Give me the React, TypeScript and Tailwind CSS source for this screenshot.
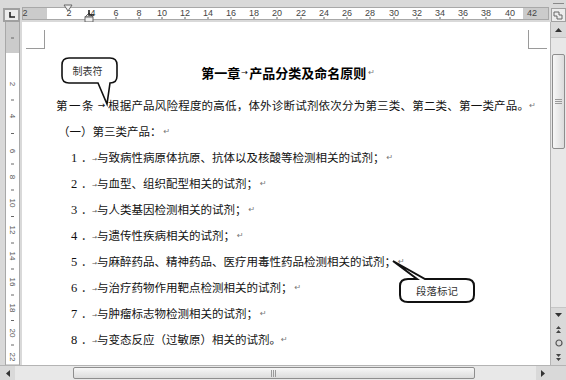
import React from 'react'

const hNums: [number, string][] = [
  [25, '2'], [69, '2'], [93, '4'], [116, '6'], [139, '8'], [162, '10'], [185, '12'], [208, '14'],
  [231, '16'], [254, '18'], [277, '20'], [301, '22'], [324, '24'], [347, '26'], [370, '28'],
  [394, '30'], [417, '32'], [440, '34'], [463, '36'], [486, '38'], [510, '40'], [532, '42'],
]

const vNums: [number, string][] = [
  [84, '2'], [116, '4'], [151, '6'], [177, '8'], [203, '10'], [230, '12'], [256, '14'],
  [282, '16'], [308, '18'], [333, '20'], [357, '22'],
]

const items = [
  '与致病性病原体抗原、抗体以及核酸等检测相关的试剂；',
  '与血型、组织配型相关的试剂；',
  '与人类基因检测相关的试剂；',
  '与遗传性疾病相关的试剂；',
  '与麻醉药品、精神药品、医疗用毒性药品检测相关的试剂；',
  '与治疗药物作用靶点检测相关的试剂；',
  '与肿瘤标志物检测相关的试剂；',
  '与变态反应（过敏原）相关的试剂。',
]

const ParaMark = ({ tight }: { tight?: boolean }) => (
  <span
    className={
      tight
        ? 'text-[8px] font-normal text-[#777] font-["DejaVu_Sans",sans-serif]'
        : 'ml-[2px] text-[8px] font-normal text-[#777] font-["DejaVu_Sans",sans-serif]'
    }
  >
    ↵
  </span>
)

function HRuler() {
  return (
    <svg width="528" height="22" className="block">
      <rect x="0" y="0" width="528" height="22" fill="#d9d9d9" />
      <rect x="0.5" y="7.5" width="526" height="12" fill="#cbcbcb" stroke="#a8a8a8" />
      <rect x="25" y="8" width="476" height="11" fill="#ffffff" />
      {hNums.map(([x, t]) => (
        <text
          key={x}
          x={x - 22}
          y="15.5"
          fontSize="9"
          textAnchor="middle"
          fill="#444"
          fontFamily="Liberation Sans, Arial, sans-serif"
        >
          {t}
        </text>
      ))}
      {hNums.slice(3, 21).map(([x]) => (
        <line key={x} x1={x - 22} y1="17" x2={x - 22} y2="19" stroke="#666" />
      ))}
      {/* indent markers */}
      <path d="M42 5 H50 L46 11 Z" fill="#eeeeee" stroke="#666" />
      <path d="M63 17 L67 13 L71 17 Z" fill="#eeeeee" stroke="#666" />
      <rect x="63" y="17" width="8" height="5" fill="#eeeeee" stroke="#666" />
      <path d="M67 10 V15 H72" fill="none" stroke="#222" strokeWidth="1.6" />
    </svg>
  )
}

function VRuler() {
  return (
    <svg width="22" height="343" className="block shrink-0">
      <rect x="0" y="0" width="22" height="343" fill="#d9d9d9" />
      <rect x="5.5" y="0" width="14" height="343" fill="#ffffff" stroke="#a8a8a8" />
      <rect x="6" y="0" width="13" height="31" fill="#cbcbcb" />
      {vNums.map(([y, t]) => (
        <text
          key={y}
          x="0"
          y="0"
          fontSize="8"
          textAnchor="middle"
          fill="#555"
          fontFamily="Liberation Sans, Arial, sans-serif"
          transform={`translate(9.5 ${y - 22}) rotate(90)`}
        >
          {t}
        </text>
      ))}
      {vNums.map(([y], i) => {
        const next = vNums[i + 1] ? vNums[i + 1][0] : y + 26
        const mid = (y + next) / 2 - 22
        return <line key={y} x1="11" y1={mid} x2="14" y2={mid} stroke="#666" />
      })}
      <line x1="11" y1="16" x2="14" y2="16" stroke="#666" />
    </svg>
  )
}

function VScroll() {
  return (
    <div className="w-[16px] shrink-0 flex flex-col bg-[#d9d9d9] border-l border-[#b4b4b4]">
      <div className="h-[15px] flex items-center justify-center">
        <svg width="7" height="4">
          <path d="M0 4 L3.5 0 L7 4 Z" fill="#333" />
        </svg>
      </div>
      <div className="h-[271px] bg-[#e8e8e8] px-[1px] pt-[16px] border-y border-[#c6c6c6]">
        <div className="h-[95px] rounded-[2px] border border-[#8e8e8e] bg-gradient-to-r from-[#f7f7f7] to-[#dcdcdc] flex items-center justify-center">
          <svg width="7" height="6">
            <path d="M0 0.5 H7 M0 2.5 H7 M0 4.5 H7" stroke="#9a9a9a" />
          </svg>
        </div>
      </div>
      <div className="h-[14px] flex items-center justify-center">
        <svg width="7" height="4">
          <path d="M0 0 L3.5 4 L7 0 Z" fill="#333" />
        </svg>
      </div>
      <div className="h-[14px] flex items-center justify-center">
        <svg width="5" height="7">
          <path d="M0 3 L2.5 0 L5 3 Z M0 7 L2.5 4 L5 7 Z" fill="#444" />
        </svg>
      </div>
      <div className="h-[14px] flex items-center justify-center">
        <svg width="8" height="8">
          <circle cx="4" cy="4" r="3" fill="none" stroke="#555" strokeWidth="1.2" />
        </svg>
      </div>
      <div className="h-[15px] flex items-center justify-center">
        <svg width="5" height="7">
          <path d="M0 0 L2.5 3 L5 0 Z M0 4 L2.5 7 L5 4 Z" fill="#444" />
        </svg>
      </div>
    </div>
  )
}

function HScroll() {
  return (
    <div className="h-[15px] shrink-0 flex bg-[#d9d9d9] border-t border-[#b4b4b4]">
      <div className="w-[15px] flex items-center justify-center">
        <svg width="4" height="7">
          <path d="M4 0 L0 3.5 L4 7 Z" fill="#333" />
        </svg>
      </div>
      <div className="w-[521px] bg-[#e8e8e8] pl-[58px] py-[1px]">
        <div className="w-[402px] h-full rounded-[2px] border border-[#8e8e8e] bg-gradient-to-b from-[#f7f7f7] to-[#dcdcdc] flex items-center justify-center">
          <svg width="6" height="7">
            <path d="M0.5 0 V7 M2.5 0 V7 M4.5 0 V7" stroke="#9a9a9a" />
          </svg>
        </div>
      </div>
      <div className="w-[14px] flex items-center justify-center">
        <svg width="4" height="7">
          <path d="M0 0 L4 3.5 L0 7 Z" fill="#333" />
        </svg>
      </div>
      <div className="w-[16px]" />
    </div>
  )
}

function Callouts() {
  return (
    <>
      <svg width="528" height="343" className="absolute left-0 top-0 pointer-events-none">
        <path
          d="M47 36 H88 Q95 36 95 43 V54 Q95 61 88 61 L85 82 L76 61 H47 Q40 61 40 54 V43 Q40 36 47 36 Z"
          fill="#ffffff"
          stroke="#111"
          strokeWidth="1.6"
        />
        <path
          d="M386 257 H395 L371 239 L403 257 H444 Q452 257 452 264 V273 Q452 280 444 280 H386 Q378 280 378 273 V264 Q378 257 386 257 Z"
          fill="#ffffff"
          stroke="#111"
          strokeWidth="2"
        />
      </svg>
      <div className="absolute left-[40px] top-[36px] w-[55px] h-[25px] flex items-center justify-center text-[10px] text-[#333] pr-[4px]">
        制表符
      </div>
      <div className="absolute left-[378px] top-[257px] w-[74px] h-[23px] flex items-center justify-center text-[10.5px] text-[#333]">
        段落标记
      </div>
    </>
  )
}

function Page() {
  return (
    <div className="relative w-[528px] shrink-0 bg-white text-[11.5px] text-[#111]">
      <div className="h-[27px] flex justify-between">
        <div className="ml-[4px] mt-[8px] w-[19px] h-[19px] border-r border-b border-[#9a9a9a]" />
        <div className="mr-[3px] mt-[8px] w-[19px] h-[19px] border-l border-b border-[#9a9a9a]" />
      </div>
      <div className="mt-[11px] h-[26px] flex items-center justify-center font-bold text-[13px] text-black pl-[4px]">
        第一章
        <span className="inline-block w-[9px] text-center text-[8px] font-normal font-['DejaVu_Sans',sans-serif]">→</span>
        产品分类及命名原则<ParaMark />
      </div>
      <div className="mt-[7px] h-[26px] flex items-center pl-[34px]">
        <span className="tracking-[1.5px]">第一条</span>
        <span className="inline-block w-[13px] text-center text-[9px] font-['DejaVu_Sans',sans-serif]">→</span>
        <span className="tracking-[0.2px]">
          根据产品风险程度的高低，体外诊断试剂依次分为第三类、第二类、第一类产品。
        </span>
        <ParaMark tight />
      </div>
      <div className="h-[26px] flex items-center pl-[36px]">
        （一）第三类产品：<ParaMark />
      </div>
      {items.map((t, i) => (
        <div key={i} className="h-[26px] flex items-center pl-[49px]">
          <span className="w-[10px] text-[12.5px] font-['Liberation_Serif',serif]">{i + 1}</span>
          <span className="w-[11px]">．</span>
          <span className="w-[5px] text-[6px] text-[#555] font-['DejaVu_Sans',sans-serif]">→</span>
          <span>{t}</span>
          <ParaMark tight={i === 7} />
        </div>
      ))}
      <Callouts />
    </div>
  )
}

export default function App() {
  return (
    <div className="w-[566px] h-[380px] overflow-hidden flex flex-col bg-[#d9d9d9] font-['Noto_Sans_CJK_SC',sans-serif]">
      <div className="h-[22px] shrink-0 flex">
        <div className="w-[22px] pt-[8px] pl-[3px]">
          <div className="w-[17px] h-[14px] border-2 border-[#a0a0a0] bg-[#ececec] flex items-center justify-center">
            <svg width="6" height="6">
              <path d="M1 0 V5 H6" fill="none" stroke="#222" strokeWidth="1.6" />
            </svg>
          </div>
        </div>
        <HRuler />
        <div className="w-[16px] flex flex-col items-center">
          <div className="mt-[3px] w-[11px] h-[1px] bg-[#888]" />
          <div className="mt-[4px] w-[15px] h-[14px] border border-[#a0a0a0] bg-[#ececec] flex items-center justify-center">
            <svg width="10" height="9">
              <path d="M1 1 H6 V4 H9 V8 H4 V5 H1 Z" fill="none" stroke="#666" />
            </svg>
          </div>
        </div>
      </div>
      <div className="flex-1 min-h-0 flex">
        <VRuler />
        <Page />
        <VScroll />
      </div>
      <HScroll />
    </div>
  )
}
